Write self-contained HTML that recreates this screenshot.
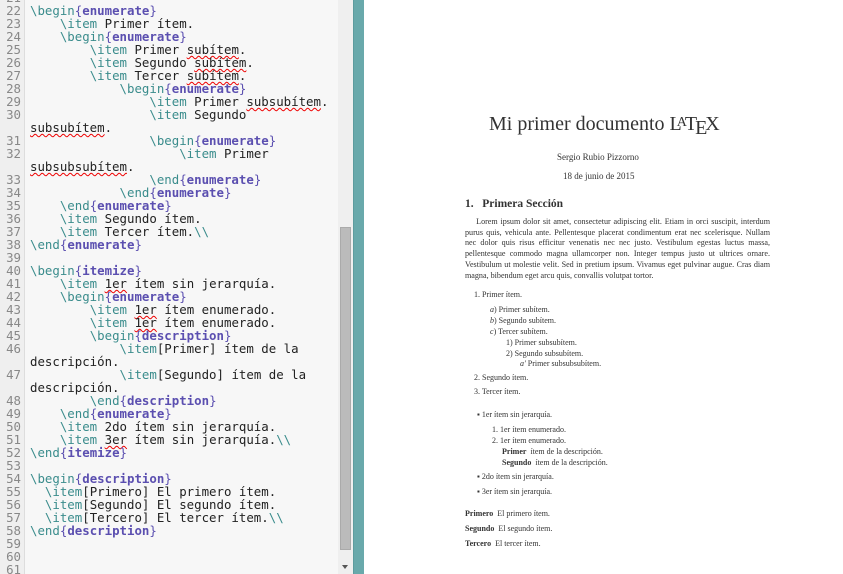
<!DOCTYPE html>
<html><head><meta charset="utf-8"><style>
*{margin:0;padding:0;box-sizing:border-box}
body{width:843px;height:574px;overflow:hidden;background:#fff;position:relative;font-family:"Liberation Serif",serif}
#ed{position:absolute;left:0;top:0;width:338px;height:574px;background:#f7f7f7;overflow:hidden}
#gut{position:absolute;left:0;top:0;width:25px;height:574px;background:#efefef;border-right:1px solid #ddd}
pre{position:absolute;top:-9px;font-family:"DejaVu Sans Mono",monospace;font-size:12.4px;line-height:13px;color:#222}
#nums{left:0;width:21px;text-align:right;color:#888}
#code{left:30px}
.c{color:#3a8c8c}.e{color:#5b4fb0;font-weight:bold}.b{color:#5b4fb0}
.s{text-decoration:underline wavy #e00;text-decoration-thickness:1px;text-underline-offset:1px}
#sb{position:absolute;left:338px;top:0;width:15px;height:574px;background:#efefef}
#th{position:absolute;left:340px;top:227px;width:11px;height:323px;background:#bbb;border:1px solid #aaa}
#ar{position:absolute;left:342px;top:565px;width:0;height:0;border-left:3px solid transparent;border-right:3px solid transparent;border-top:4px solid #555}
#tl{position:absolute;left:353px;top:0;width:11px;height:574px;background:#69a9ab;border-left:1px solid #5d9c9e}
.p{position:absolute;font-size:8px;color:#333;white-space:nowrap;line-height:10px}
.t{position:absolute;font-size:20px;color:#333;white-space:nowrap}
</style></head><body>
<div id="ed"><div id="gut"></div>
<pre id="nums">
21
22
23
24
25
26
27
28
29
30

31
32

33
34
35
36
37
38
39
40
41
42
43
44
45
46

47

48
49
50
51
52
53
54
55
56
57
58
59
60
61</pre>
<pre id="code">

<span class="c">\begin</span><span class="b">{</span><span class="e">enumerate</span><span class="b">}</span>
    <span class="c">\item</span> Primer ítem.
    <span class="c">\begin</span><span class="b">{</span><span class="e">enumerate</span><span class="b">}</span>
        <span class="c">\item</span> Primer <span class="s">subítem</span>.
        <span class="c">\item</span> Segundo <span class="s">subítem</span>.
        <span class="c">\item</span> Tercer <span class="s">subítem</span>.
            <span class="c">\begin</span><span class="b">{</span><span class="e">enumerate</span><span class="b">}</span>
                <span class="c">\item</span> Primer <span class="s">subsubítem</span>.
                <span class="c">\item</span> Segundo
<span class="s">subsubítem</span>.
                <span class="c">\begin</span><span class="b">{</span><span class="e">enumerate</span><span class="b">}</span>
                    <span class="c">\item</span> Primer
<span class="s">subsubsubítem</span>.
                <span class="c">\end</span><span class="b">{</span><span class="e">enumerate</span><span class="b">}</span>
            <span class="c">\end</span><span class="b">{</span><span class="e">enumerate</span><span class="b">}</span>
    <span class="c">\end</span><span class="b">{</span><span class="e">enumerate</span><span class="b">}</span>
    <span class="c">\item</span> Segundo ítem.
    <span class="c">\item</span> Tercer ítem.<span class="c">\\</span>
<span class="c">\end</span><span class="b">{</span><span class="e">enumerate</span><span class="b">}</span>

<span class="c">\begin</span><span class="b">{</span><span class="e">itemize</span><span class="b">}</span>
    <span class="c">\item</span> <span class="s">1er</span> ítem sin jerarquía.
    <span class="c">\begin</span><span class="b">{</span><span class="e">enumerate</span><span class="b">}</span>
        <span class="c">\item</span> <span class="s">1er</span> ítem enumerado.
        <span class="c">\item</span> <span class="s">1er</span> ítem enumerado.
        <span class="c">\begin</span><span class="b">{</span><span class="e">description</span><span class="b">}</span>
            <span class="c">\item</span>[Primer] ítem de la
descripción.
            <span class="c">\item</span>[Segundo] ítem de la
descripción.
        <span class="c">\end</span><span class="b">{</span><span class="e">description</span><span class="b">}</span>
    <span class="c">\end</span><span class="b">{</span><span class="e">enumerate</span><span class="b">}</span>
    <span class="c">\item</span> 2do ítem sin jerarquía.
    <span class="c">\item</span> <span class="s">3er</span> ítem sin jerarquía.<span class="c">\\</span>
<span class="c">\end</span><span class="b">{</span><span class="e">itemize</span><span class="b">}</span>

<span class="c">\begin</span><span class="b">{</span><span class="e">description</span><span class="b">}</span>
  <span class="c">\item</span>[Primero] El primero ítem.
  <span class="c">\item</span>[Segundo] El segundo ítem.
  <span class="c">\item</span>[Tercero] El tercer ítem.<span class="c">\\</span>
<span class="c">\end</span><span class="b">{</span><span class="e">description</span><span class="b">}</span>
</pre></div>
<div id="sb"></div><div id="th"></div><div id="ar"></div><div id="tl"></div>

<div class="t" style="left:489px;top:113px">Mi primer documento L<span style="font-size:14px;position:relative;top:-4px;margin-left:-5px">A</span><span style="margin-left:-2px">T</span><span style="position:relative;top:4px;margin-left:-2px">E</span><span style="margin-left:-2px">X</span></div>
<div class="p" style="left:557px;top:152px;font-size:9px">Sergio Rubio Pizzorno</div>
<div class="p" style="left:563px;top:171px;font-size:9px">18 de junio de 2015</div>
<div class="p" style="left:465px;top:197px;font-size:11.5px;font-weight:bold;line-height:14px">1.&nbsp;&nbsp;&nbsp;Primera Sección</div>
<div class="p" style="left:465px;top:217px;width:305px;white-space:normal;text-align:justify;line-height:10.7px;font-size:8.1px">&nbsp;&nbsp;&nbsp;&nbsp;Lorem ipsum dolor sit amet, consectetur adipiscing elit. Etiam in orci suscipit, interdum purus quis, vehicula ante. Pellentesque placerat condimentum erat nec scelerisque. Nullam nec dolor quis risus efficitur venenatis nec nec justo. Vestibulum egestas luctus massa, pellentesque commodo magna ullamcorper non. Integer tempus justo ut ultrices ornare. Vestibulum ut molestie velit. Sed in pretium ipsum. Vivamus eget pulvinar augue. Cras diam magna, bibendum eget arcu quis, convallis volutpat tortor.</div>
<div class="p" style="left:474px;top:290px">1. Primer ítem.</div>
<div class="p" style="left:490px;top:305px"><i>a</i>) Primer subítem.</div>
<div class="p" style="left:490px;top:316px"><i>b</i>) Segundo subítem.</div>
<div class="p" style="left:490px;top:327px"><i>c</i>) Tercer subítem.</div>
<div class="p" style="left:506px;top:338px">1) Primer subsubítem.</div>
<div class="p" style="left:506px;top:349px">2) Segundo subsubítem.</div>
<div class="p" style="left:520px;top:359px"><i>a′</i> Primer subsubsubítem.</div>
<div class="p" style="left:474px;top:373px">2. Segundo ítem.</div>
<div class="p" style="left:474px;top:387px">3. Tercer ítem.</div>
<div class="p" style="left:477px;top:410px">▪ 1er ítem sin jerarquía.</div>
<div class="p" style="left:492px;top:425px">1. 1er ítem enumerado.</div>
<div class="p" style="left:492px;top:436px">2. 1er ítem enumerado.</div>
<div class="p" style="left:502px;top:447px"><b>Primer</b>&nbsp; ítem de la descripción.</div>
<div class="p" style="left:502px;top:458px"><b>Segundo</b>&nbsp; ítem de la descripción.</div>
<div class="p" style="left:477px;top:472px">▪ 2do ítem sin jerarquía.</div>
<div class="p" style="left:477px;top:487px">▪ 3er ítem sin jerarquía.</div>
<div class="p" style="left:465px;top:509px"><b>Primero</b>&nbsp; El primero ítem.</div>
<div class="p" style="left:465px;top:524px"><b>Segundo</b>&nbsp; El segundo ítem.</div>
<div class="p" style="left:465px;top:539px"><b>Tercero</b>&nbsp; El tercer ítem.</div>
</body></html>
